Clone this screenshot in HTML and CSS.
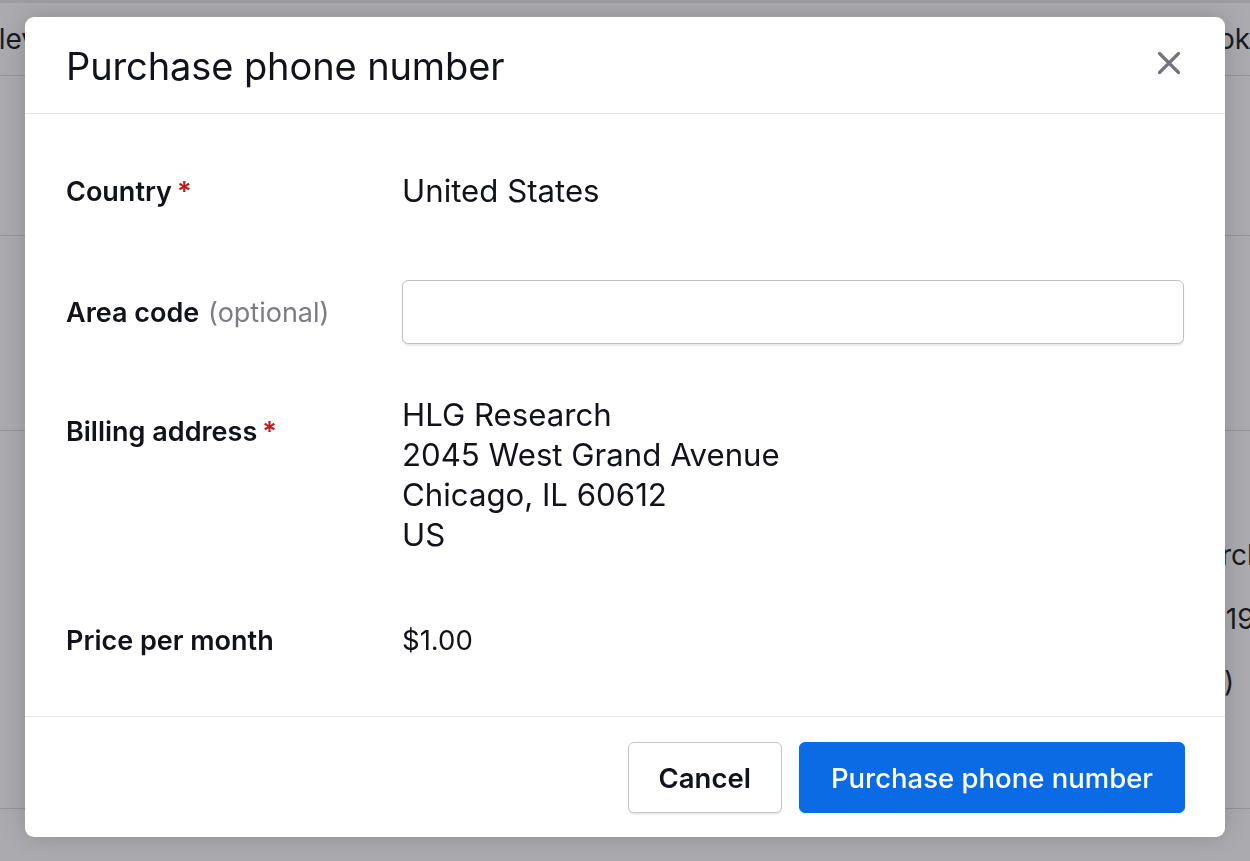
FILE: index.html
```html
<!DOCTYPE html>
<html lang="en">
<head>
<meta charset="UTF-8">
<title>Purchase phone number</title>
<link rel="stylesheet" href="styles.css">
</head>
<body>

<!-- page behind the dialog -->
<div class="page">
    <div class="table-head">
        <div class="cell-left"><span>Elev</span></div>
        <div class="cell-right">Webhook</div>
    </div>
    <div class="table-row row-a"></div>
    <div class="table-row row-b"></div>
    <div class="table-row row-c">
        <div class="cell-right">
            <div>Research</div>
            <div>2019</div>
            <div>(US)</div>
        </div>
    </div>
    <div class="table-row row-d"></div>
</div>

<div class="overlay">
    <div class="modal">
        <div class="modal-header">
            <h1 class="modal-title">Purchase phone number</h1>
            <button class="close-btn" aria-label="Close">
                <svg width="24" height="24" viewBox="0 0 24 24">
                    <path d="M2.5 2.5 L21.5 21.5 M21.5 2.5 L2.5 21.5" stroke="currentColor" stroke-width="3.2" stroke-linecap="round" fill="none"/>
                </svg>
            </button>
        </div>

        <div class="modal-body">
            <div class="field field-country">
                <div class="field-label">Country<span class="req">*</span></div>
                <div class="field-value">United States</div>
            </div>
            <div class="field field-area">
                <div class="field-label">Area code <span class="optional">(optional)</span></div>
                <div class="field-value"><input type="text" class="text-input"></div>
            </div>
            <div class="field field-billing">
                <div class="field-label">Billing address<span class="req">*</span></div>
                <div class="field-value">
                    HLG Research<br>
                    2045 West Grand Avenue<br>
                    Chicago, IL 60612<br>
                    US
                </div>
            </div>
            <div class="field field-price">
                <div class="field-label">Price per month</div>
                <div class="field-value price">$1.00</div>
            </div>
        </div>

        <div class="modal-footer">
            <button class="btn btn-secondary">Cancel</button>
            <button class="btn btn-primary">Purchase phone number</button>
        </div>
    </div>
</div>

</body>
</html>
```

FILE: styles.css
```css
body {
    margin: 0;
    font-family: Inter, "Noto Sans", sans-serif;
    color: #11121a;
    background: #fff;
    overflow: hidden;
}
.page {
    height: 861px;
    font-size: 28px;
    color: #111;
}
.table-head {
    display: flex;
    justify-content: space-between;
    align-items: center;
    height: 72px;
    border-top: 3px solid #e6e6ea;
    border-bottom: 1px solid #d4d4d8;
}
.cell-left {
    width: 37px;
    display: flex;
    justify-content: flex-end;
    overflow: hidden;
    white-space: nowrap;
}
.cell-right {
    width: 100px;
    white-space: nowrap;
    overflow: hidden;
}
.table-head .cell-right {
    text-indent: -25px;
}
.table-row {
    border-bottom: 1px solid #d4d4d8;
    display: flex;
    justify-content: flex-end;
}
.row-a { height: 159px; }
.row-b { height: 194px; }
.row-c { height: 377px; }
.row-c .cell-right {
    width: 129px;
    padding-top: 92px;
    line-height: 64px;
}
.row-c .cell-right div:nth-child(1) { text-indent: 19px; }
.row-c .cell-right div:nth-child(2) { text-indent: 70px; }
.row-c .cell-right div:nth-child(3) { text-indent: 54px; }
.row-d { height: 60px; }

.overlay {
    position: fixed;
    inset: 0;
    background: rgba(44, 46, 56, 0.4);
    padding: 17px 25px;
}
.modal {
    background: #fff;
    border-radius: 9px;
    height: 820px;
    display: flex;
    flex-direction: column;
    box-shadow: 0 0 24px rgba(0, 0, 0, 0.18);
    overflow: hidden;
}
.modal-header {
    display: flex;
    align-items: center;
    justify-content: space-between;
    height: 96px;
    padding: 0 41px;
    border-bottom: 1px solid #e3e3e8;
}
.modal-title {
    margin: 0;
    font-size: 38px;
    font-weight: 400;
    letter-spacing: -0.1px;
    padding-top: 2px;
}
.close-btn {
    border: none;
    background: none;
    padding: 0;
    color: #74757c;
    display: flex;
    margin-right: 3px;
    margin-bottom: 4px;
    cursor: pointer;
}
.modal-body {
    flex: 1;
    padding: 57px 41px 0;
}
.field {
    display: flex;
    align-items: center;
}
.field-label {
    width: 336px;
    flex-shrink: 0;
    font-size: 27px;
    font-weight: 600;
}
.field-value {
    flex: 1;
    font-size: 31.2px;
    line-height: 40px;
}
.field-value.price {
    font-size: 27.5px;
}
.req {
    color: #c01818;
    margin-left: 5px;
}
.optional {
    color: #7b7c84;
    font-weight: 400;
    margin-left: 2px;
}
.field-area {
    margin-top: 69px;
}
.field-billing {
    margin-top: 51px;
    align-items: flex-start;
}
.field-billing .field-label {
    padding-top: 20px;
}
.field-price {
    margin-top: 65px;
}
.text-input {
    display: block;
    width: 100%;
    box-sizing: border-box;
    height: 64px;
    border: 1px solid #bfc0c6;
    border-radius: 6px;
    box-shadow: 0 2px 1px rgba(0, 0, 0, 0.08);
    font-family: inherit;
    font-size: 28px;
    padding: 0 16px;
    outline: none;
}
.modal-footer {
    display: flex;
    justify-content: flex-end;
    gap: 17px;
    padding: 25px 40px 24px;
    border-top: 1px solid #e3e3e8;
}
.btn {
    font-family: inherit;
    font-size: 27.5px;
    font-weight: 600;
    height: 71px;
    padding: 0 31px;
    border-radius: 6px;
    cursor: pointer;
}
.btn-secondary {
    background: #fff;
    color: #11121a;
    border: 1px solid #c3c4ca;
    box-shadow: 0 2px 1px rgba(0, 0, 0, 0.08);
    padding: 0 30px;
}
.btn-primary {
    background: #0a6be4;
    color: #fff;
    border: 1px solid #0a6be4;
    font-weight: 500;
}
```
